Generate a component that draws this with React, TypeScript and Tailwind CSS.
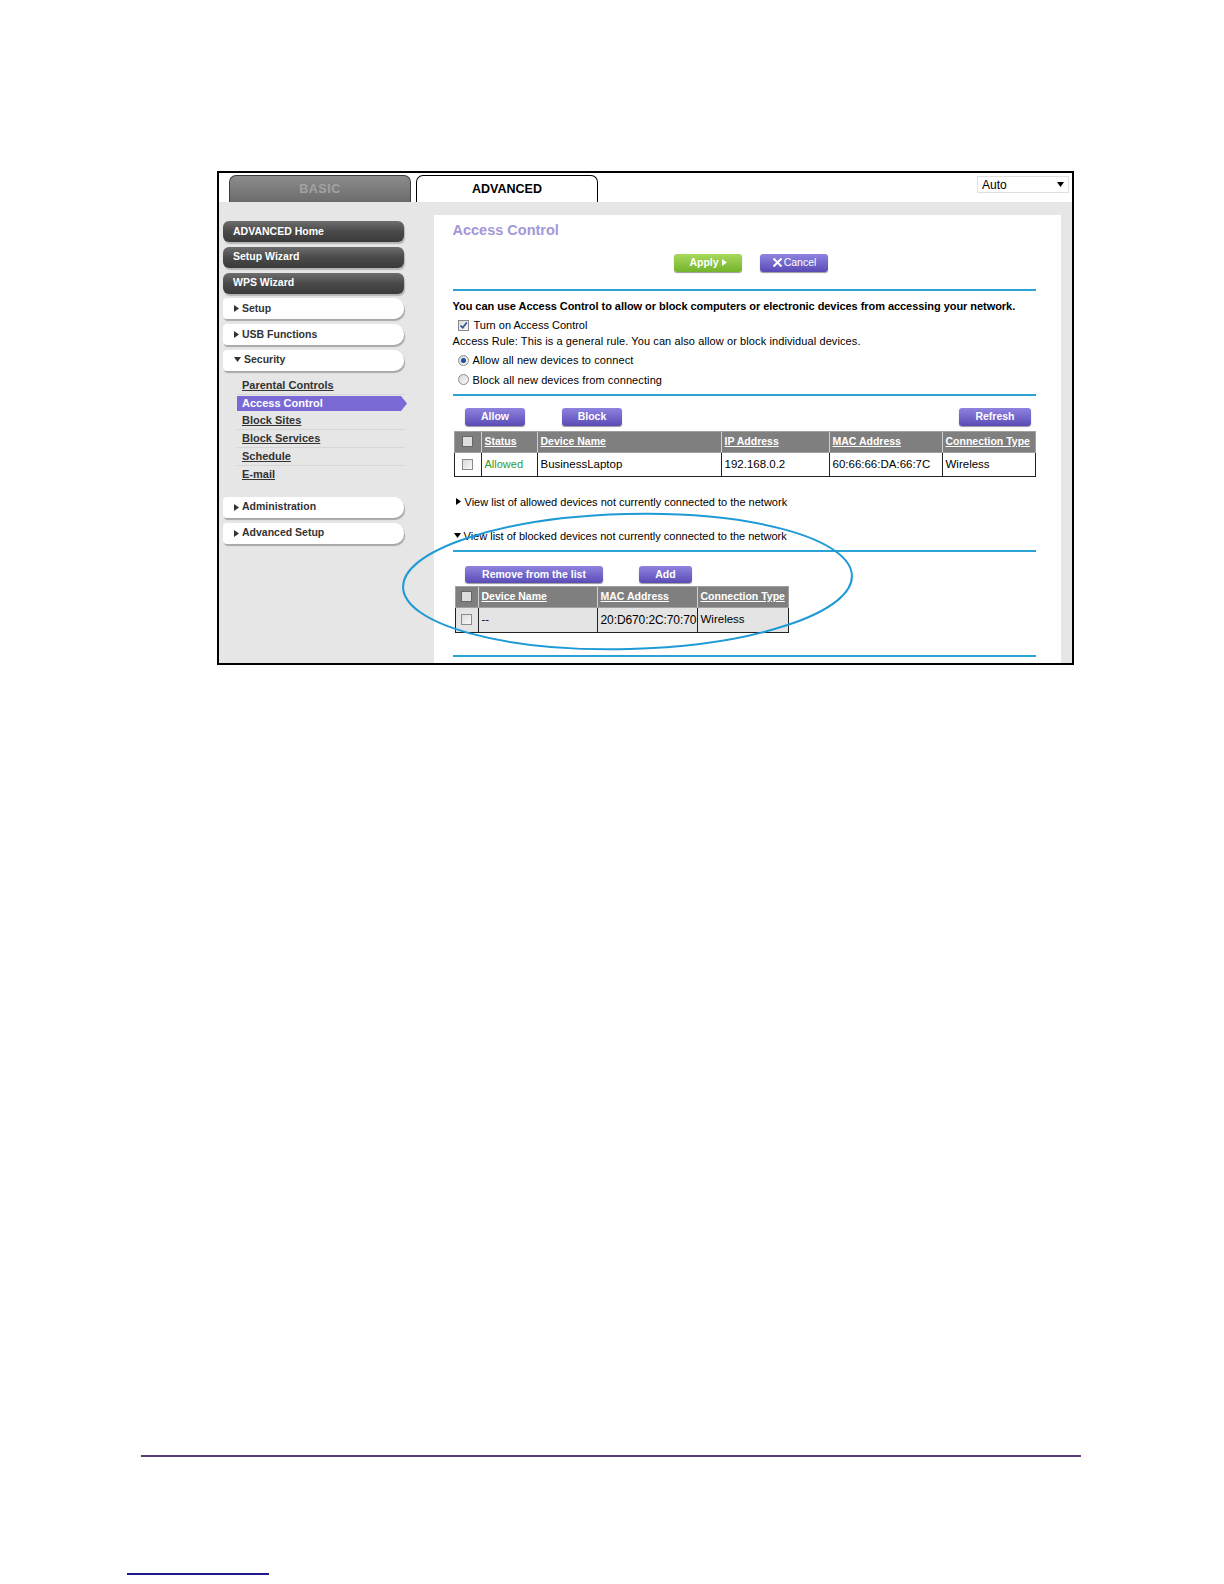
import React from "react";

const font = { fontFamily: '"Liberation Sans", Arial, sans-serif' };

function Tri({ down = false, className = "" }: { down?: boolean; className?: string }) {
  return down ? (
    <svg width="7" height="6" viewBox="0 0 7 6" className={className}>
      <path d="M0 0 L7 0 L3.5 5 Z" fill="currentColor" />
    </svg>
  ) : (
    <svg width="5" height="7" viewBox="0 0 5 7" className={className}>
      <path d="M0 0 L5 3.5 L0 7 Z" fill="currentColor" />
    </svg>
  );
}

function DarkBtn({ label }: { label: string }) {
  return (
    <div className="h-[21px] w-[181px] rounded-[6px] bg-gradient-to-b from-[#6e6e6e] via-[#4a4a4a] to-[#3a3a3a] flex items-center pl-[10px] text-white font-bold text-[10.5px] shadow-[1px_2px_1px_#b5b5b5]">
      {label}
    </div>
  );
}

function LightBtn({ label, down = false }: { label: string; down?: boolean }) {
  return (
    <div className="h-[21px] w-[181px] rounded-l-[4px] rounded-r-[10px] bg-white flex items-center pl-[11px] gap-[3px] text-[#333] font-bold text-[10.5px] shadow-[1px_2px_1px_#a8a8a8]">
      <Tri down={down} className="text-[#333]" />
      <span>{label}</span>
    </div>
  );
}

function SubLink({ label, active = false, last = false }: { label: string; active?: boolean; last?: boolean }) {
  if (active) {
    return (
      <div className="relative h-[17.8px] ml-[14px] w-[164px] flex items-center">
        <div className="h-[15px] w-[164px] bg-[#7a6ad6] flex items-center pl-[5px] text-white font-bold text-[11px]">
          {label}
        </div>
        <svg width="6" height="15" viewBox="0 0 6 15" className="absolute right-[-6px] top-[1.4px]">
          <path d="M0 0 L6 7.5 L0 15 Z" fill="#7a6ad6" />
        </svg>
      </div>
    );
  }
  return (
    <div className={`h-[17.8px] ml-[14px] w-[168px] ${last ? "" : "border-b border-[#d6d6d6]"} flex items-center pl-[5px]`}>
      <span className="text-[#333] font-bold text-[11px] underline">{label}</span>
    </div>
  );
}

function PBtn({ label, w, h = "h-[18px]" }: { label: React.ReactNode; w: string; h?: string }) {
  return (
    <div
      className={`${w} ${h} rounded-[3px] bg-gradient-to-b from-[#8f83e0] to-[#5a4bb5] text-white font-bold text-[10.5px] flex items-center justify-center shadow-[0_1px_1px_#999]`}
    >
      {label}
    </div>
  );
}

function Cb({ checked = false }: { checked?: boolean }) {
  return (
    <div className="w-[11px] h-[11px] border border-[#8a8a8a] bg-gradient-to-br from-[#dcdcdc] to-[#f8f8f8] flex items-center justify-center">
      {checked && (
        <svg width="9" height="9" viewBox="0 0 9 9">
          <path d="M1.5 4.5 L3.7 6.8 L7.8 1.5" stroke="#2a4e9a" strokeWidth="1.6" fill="none" />
        </svg>
      )}
    </div>
  );
}

function Radio({ on = false }: { on?: boolean }) {
  return (
    <div className="w-[11px] h-[11px] rounded-full border border-[#8a8a8a] bg-gradient-to-br from-[#d8d8d8] to-[#fafafa] flex items-center justify-center">
      {on && <div className="w-[5px] h-[5px] rounded-full bg-[#1f4f9e]" />}
    </div>
  );
}

function Line() {
  return <div className="h-[2px] w-[583px] bg-[#2aa2d6]" />;
}

function HeadCell({ w, label, first = false }: { w: string; label?: string; first?: boolean }) {
  return (
    <div className={`${w} h-full flex items-center ${first ? "justify-center" : "pl-[3px]"} border-r border-[#d0d0d0] last:border-r-0`}>
      {first ? (
        <div className="w-[11px] h-[11px] border border-[#666] bg-[#dedede]" />
      ) : (
        <span className="text-white font-bold text-[10.5px] underline">{label}</span>
      )}
    </div>
  );
}

function BodyCell({ w, children, first = false }: { w: string; children?: React.ReactNode; first?: boolean }) {
  return (
    <div className={`${w} h-full flex items-center ${first ? "justify-center" : "pl-[3px]"} border-r border-[#222] last:border-r-0 text-[11.5px] text-black`}>
      {children}
    </div>
  );
}

export default function App() {
  return (
    <div className="relative w-[1224px] h-[1584px] bg-white" style={font}>
      <div className="pt-[171px] pl-[217px]">
        <div className="w-[857px] h-[494px] border-2 border-black flex flex-col overflow-hidden">
          {/* top bar */}
          <div className="h-[29px] shrink-0 bg-white flex items-end pl-[10px] relative">
            <div className="w-[182px] h-[27px] rounded-t-[7px] border border-[#3a3a3a] border-b-0 bg-gradient-to-b from-[#8c8c8c] to-[#6c6c6c] flex items-center justify-center text-[#a2a2a2] font-bold text-[12.5px] tracking-[0.5px]">
              BASIC
            </div>
            <div className="ml-[5px] w-[182px] h-[27px] rounded-t-[7px] border border-black border-b-0 bg-white flex items-center justify-center text-black font-bold text-[12.5px]">
              ADVANCED
            </div>
            <div className="absolute right-[3px] top-[3px] w-[92px] h-[17px] border border-[#e0e0e0] bg-white flex items-center justify-between pl-[4px] pr-[4px] text-[12px] text-black">
              <span>Auto</span>
              <Tri down className="text-black" />
            </div>
          </div>

          {/* body */}
          <div className="flex-1 bg-[#e6e6e6] flex">
            {/* sidebar */}
            <div className="w-[215px] shrink-0 pl-[4px] pt-[19px] flex flex-col">
              <div className="flex flex-col gap-[4.75px]">
                <DarkBtn label="ADVANCED Home" />
                <DarkBtn label="Setup Wizard" />
                <DarkBtn label="WPS Wizard" />
                <LightBtn label="Setup" />
                <LightBtn label="USB Functions" />
                <LightBtn label="Security" down />
              </div>
              <div className="mt-[6px] flex flex-col">
                <SubLink label="Parental Controls" />
                <SubLink label="Access Control" active />
                <SubLink label="Block Sites" />
                <SubLink label="Block Services" />
                <SubLink label="Schedule" />
                <SubLink label="E-mail" last />
              </div>
              <div className="mt-[13px] flex flex-col gap-[5px]">
                <LightBtn label="Administration" />
                <LightBtn label="Advanced Setup" />
              </div>
            </div>

            {/* main panel */}
            <div className="w-[627px] shrink-0 mt-[13px] bg-white pl-[18.5px] flex flex-col">
              <div className="h-[25px] pt-[3px]">
                <span className="text-[#a298da] font-bold text-[14.5px] leading-[18px]">Access Control</span>
              </div>
              <div className="mt-[13.5px] h-[18px] flex">
                <div className="ml-[221.5px] w-[68px] h-[18px] rounded-[3px] bg-gradient-to-b from-[#a8d85a] to-[#74b42c] text-white font-bold text-[10.5px] flex items-center justify-center gap-[3px] shadow-[0_1px_1px_#999]">
                  <span>Apply</span>
                  <Tri className="text-white" />
                </div>
                <div className="ml-[18px]">
                  <PBtn
                    w="w-[68px]"
                    label={
                      <span className="flex items-center gap-[1px]">
                        <svg width="11" height="11" viewBox="0 0 11 11">
                          <path d="M1.5 1.5 L9.5 9.5 M9.5 1.5 L1.5 9.5" stroke="white" strokeWidth="2" />
                        </svg>
                        <span className="font-normal">Cancel</span>
                      </span>
                    }
                  />
                </div>
              </div>
              <div className="mt-[17.5px]">
                <Line />
              </div>
              <div className="mt-[7px] h-[16px] flex items-center text-[11px] font-bold text-black tracking-[-0.05px] whitespace-nowrap">
                You can use Access Control to allow or block computers or electronic devices from accessing your network.
              </div>
              <div className="mt-[3px] h-[16px] flex items-center gap-[5px] pl-[5px] text-[11px] text-black">
                <Cb checked />
                <span>Turn on Access Control</span>
              </div>
              <div className="h-[16px] flex items-center text-[11px] text-black tracking-[0.1px] whitespace-nowrap">
                Access Rule: This is a general rule. You can also allow or block individual devices.
              </div>
              <div className="mt-[3.6px] h-[16px] flex items-center gap-[4px] pl-[5px] text-[11px] text-black tracking-[0.1px]">
                <Radio on />
                <span>Allow all new devices to connect</span>
              </div>
              <div className="mt-[3.4px] h-[16px] flex items-center gap-[4px] pl-[5px] text-[11px] text-black tracking-[0.1px]">
                <Radio />
                <span>Block all new devices from connecting</span>
              </div>
              <div className="mt-[6px]">
                <Line />
              </div>
              <div className="mt-[12px] h-[18px] flex pl-[12.5px]">
                <PBtn w="w-[60px]" label="Allow" />
                <div className="ml-[37px]">
                  <PBtn w="w-[60px]" label="Block" />
                </div>
                <div className="ml-[337px]">
                  <PBtn w="w-[72px]" label="Refresh" />
                </div>
              </div>
              {/* table 1 */}
              <div className="mt-[5px] ml-[1px] w-[582px] flex flex-col">
                <div className="h-[22px] bg-[#7f7f7f] border border-[#a0a0a0] flex">
                  <HeadCell w="w-[27px]" first />
                  <HeadCell w="w-[56px]" label="Status" />
                  <HeadCell w="w-[184px]" label="Device Name" />
                  <HeadCell w="w-[108px]" label="IP Address" />
                  <HeadCell w="w-[113px]" label="MAC Address" />
                  <HeadCell w="w-[92px]" label="Connection Type" />
                </div>
                <div className="h-[24px] bg-white border border-[#222] border-t-0 flex">
                  <BodyCell w="w-[27px]" first>
                    <Cb />
                  </BodyCell>
                  <BodyCell w="w-[56px]">
                    <span className="text-[#2f9a2f] text-[11px]">Allowed</span>
                  </BodyCell>
                  <BodyCell w="w-[184px]">BusinessLaptop</BodyCell>
                  <BodyCell w="w-[108px]">192.168.0.2</BodyCell>
                  <BodyCell w="w-[113px]">60:66:66:DA:66:7C</BodyCell>
                  <BodyCell w="w-[92px]">Wireless</BodyCell>
                </div>
              </div>
              <div className="mt-[17px] h-[16px] flex items-center gap-[4px] pl-[3px] text-[11px] text-black whitespace-nowrap">
                <Tri className="text-black" />
                <span>View list of allowed devices not currently connected to the network</span>
              </div>
              <div className="mt-[18px] h-[16px] flex items-center gap-[3px] pl-[1px] text-[11px] text-black whitespace-nowrap">
                <Tri down className="text-black" />
                <span>View list of blocked devices not currently connected to the network</span>
              </div>
              <div className="mt-[6.5px]">
                <Line />
              </div>
              <div className="mt-[13.5px] h-[17px] flex pl-[12.5px]">
                <PBtn w="w-[138px]" h="h-[17px]" label="Remove from the list" />
                <div className="ml-[36px]">
                  <PBtn w="w-[53px]" h="h-[17px]" label="Add" />
                </div>
              </div>
              {/* table 2 */}
              <div className="mt-[3px] ml-[2px] w-[334px] flex flex-col">
                <div className="h-[22px] bg-[#7f7f7f] border border-[#a0a0a0] flex">
                  <HeadCell w="w-[23px]" first />
                  <HeadCell w="w-[119px]" label="Device Name" />
                  <HeadCell w="w-[100px]" label="MAC Address" />
                  <HeadCell w="w-[90px]" label="Connection Type" />
                </div>
                <div className="h-[25px] bg-[#e4e4e4] border border-[#222] border-t-0 flex">
                  <BodyCell w="w-[23px]" first>
                    <Cb />
                  </BodyCell>
                  <BodyCell w="w-[119px]">--</BodyCell>
                  <BodyCell w="w-[100px]">
                    <span className="text-[12px] tracking-[-0.1px] whitespace-nowrap">20:D670:2C:70:70</span>
                  </BodyCell>
                  <BodyCell w="w-[90px]">Wireless</BodyCell>
                </div>
              </div>
              <div className="mt-[22.5px]">
                <Line />
              </div>
            </div>
            <div className="flex-1" />
          </div>
        </div>
      </div>

      {/* annotation ellipse */}
      <svg className="absolute left-[398px] top-[506px]" width="460" height="152" viewBox="0 0 460 152">
        <ellipse cx="229.5" cy="75.5" rx="224.5" ry="67.5" fill="none" stroke="#1e9ad6" strokeWidth="2" transform="rotate(-1.5 229.5 75.5)" />
      </svg>

      {/* footer */}
      <div className="absolute left-[141px] top-[1455px] w-[940px] h-[2px] bg-[#5b3d78]" />
      <div className="absolute left-[127px] top-[1573px] w-[142px] h-[2px] bg-[#1c1c8c]" />
    </div>
  );
}
